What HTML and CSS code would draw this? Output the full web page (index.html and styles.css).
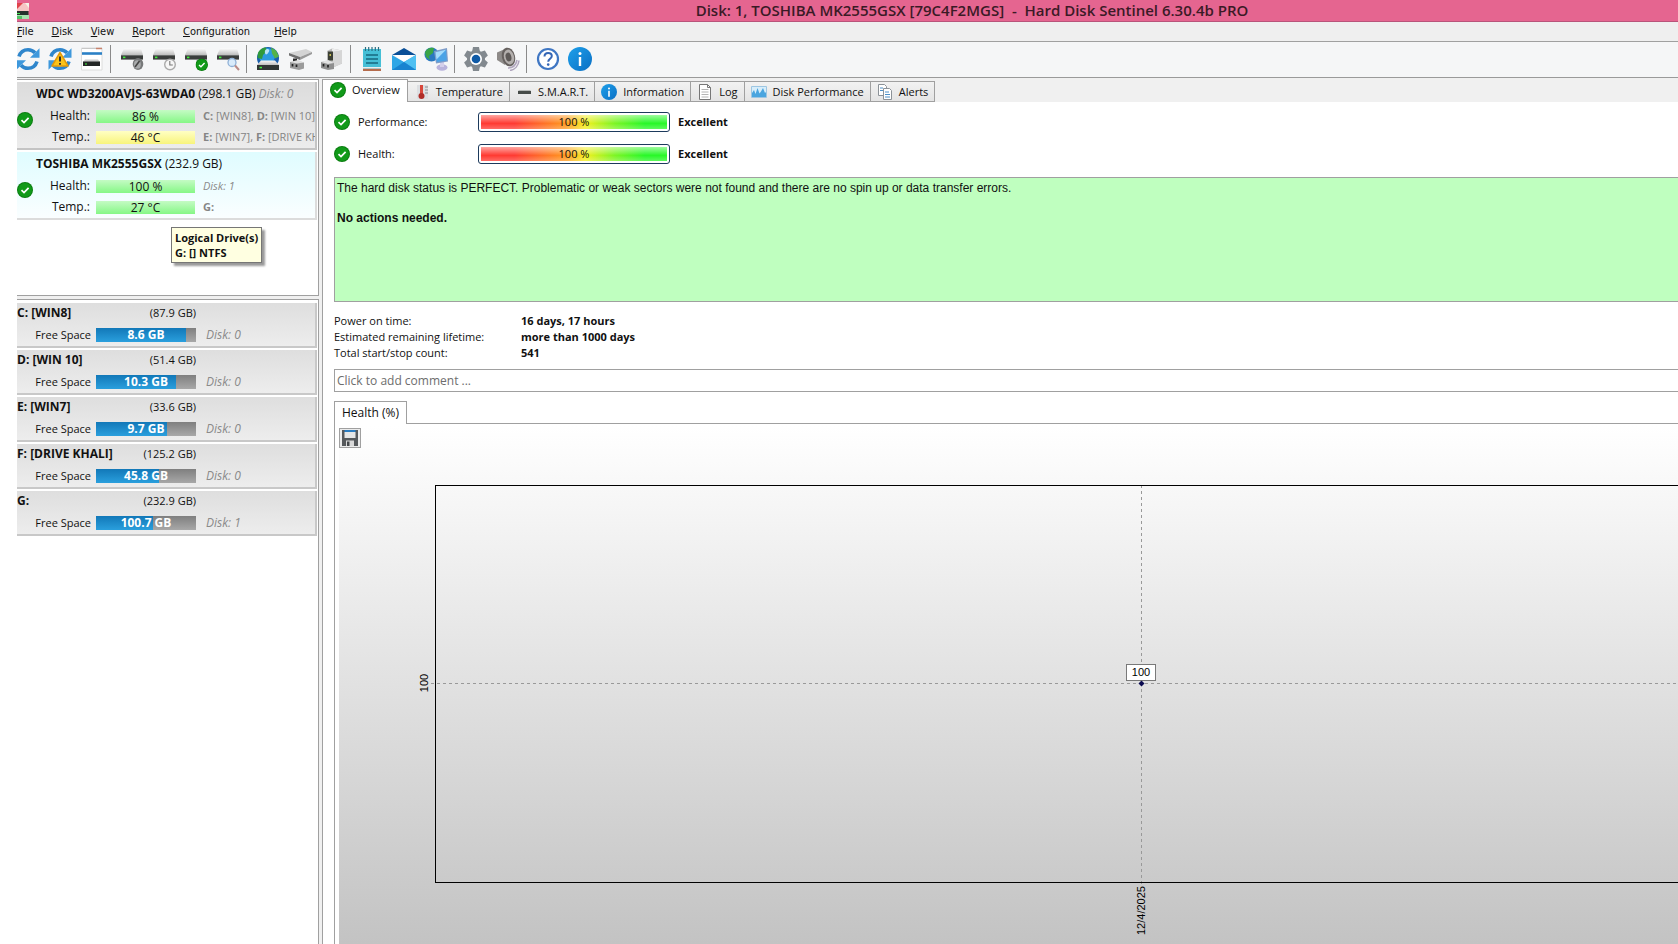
FILE: index.html
```html
<!DOCTYPE html>
<html lang="en">
<head>
    <meta charset="UTF-8">
    <meta name="viewport" content="width=device-width, initial-scale=1.0">
    <title>Hard Disk Sentinel</title>
    <link rel="stylesheet" href="styles.css">
</head>

<body>
    <!-- Shared icon shapes -->
    <svg class="defs" width="0" height="0" aria-hidden="true">
        <defs>
            <linearGradient id="silver" x1="0" y1="0" x2="0" y2="1">
                <stop offset="0" stop-color="#fafafa"/>
                <stop offset="1" stop-color="#bdbdbd"/>
            </linearGradient>
            <linearGradient id="sky" x1="0" y1="0" x2="1" y2="1">
                <stop offset="0" stop-color="#1ea0ea"/>
                <stop offset="1" stop-color="#0b6fc4"/>
            </linearGradient>
            <linearGradient id="chartBg" x1="0" y1="0" x2="0" y2="1">
                <stop offset="0" stop-color="#ffffff"/>
                <stop offset="1" stop-color="#c3c3c3"/>
            </linearGradient>
            <symbol id="check" viewBox="0 0 16 16">
                <circle cx="8" cy="8" r="8" fill="#0a7d10"/>
                <circle cx="8" cy="8" r="7" fill="#119a19"/>
                <path d="M4.5 8.2 7 10.6l4.6-4.8" fill="none" stroke="#fff" stroke-width="1.7"/>
            </symbol>
            <symbol id="info" viewBox="0 0 24 24">
                <circle cx="12" cy="12" r="12" fill="url(#sky)"/>
                <circle cx="12" cy="6.6" r="1.5" fill="#fff"/>
                <path d="M12 10v9" stroke="#fff" stroke-width="2.4"/>
            </symbol>
            <symbol id="drive" viewBox="0 0 24 24">
                <path d="M4 1.500h17l2 6.500H1z" fill="url(#silver)"/>
                <path d="M1 8h22v4.6H1z" fill="#3a3d3c"/>
                <path d="M1 8h22v1H1z" fill="#6a6d6c"/>
                <path d="M3 9.600h2.400v1.600H3z" fill="#3ff03a"/>
            </symbol>
            <symbol id="sync" viewBox="0 0 24 24">
                <path d="M3 9.500C4.500 4.800 8 2.700 12 2.700c3 0 5.300 1.200 7 3.100" fill="none" stroke="#2f86cc" stroke-width="3.600"/>
                <path d="M23.500 1.200v9.600h-9.500z" fill="#3e98dc"/>
                <path d="M21 14.500c-1.500 4.700-5 6.800-9 6.800-3 0-5.300-1.200-7-3.100" fill="none" stroke="#2f86cc" stroke-width="3.600"/>
                <path d="M.500 22.800v-9.600H10z" fill="#3e98dc"/>
            </symbol>
        </defs>
    </svg>

    <div class="app">
        <header class="titlebar">
            <svg class="app-icon" width="13" height="18" viewBox="0 0 13 18" aria-hidden="true">
                <path d="M0 1h12v8H0z" fill="#f6c4c4"/>
                <path d="M0 1h6L0 7z" fill="#e0434a"/>
                <path d="M8 1h4v5z" fill="#f4f4e8"/>
                <path d="M0 9h11.500v4H0z" fill="#26322c"/>
                <path d="M0 11h3v1H0z" fill="#43e050"/>
                <path d="M0 13h12v4H0z" fill="#a7e3b0"/>
                <path d="M0 14h5v3H0z" fill="#52c267"/>
            </svg>
            <h1>Disk: 1, TOSHIBA MK2555GSX [79C4F2MGS]&nbsp; - &nbsp;Hard Disk Sentinel 6.30.4b PRO</h1>
        </header>

        <nav class="menu">
            <button type="button"><u>F</u>ile</button>
            <button type="button"><u>D</u>isk</button>
            <button type="button"><u>V</u>iew</button>
            <button type="button"><u>R</u>eport</button>
            <button type="button"><u>C</u>onfiguration</button>
            <button type="button" class="help"><u>H</u>elp</button>
        </nav>

        <div class="toolbar">
            <button type="button" aria-label="Refresh">
                <svg viewBox="0 0 24 24"><use href="#sync"/></svg>
            </button>
            <button type="button" aria-label="Refresh with warning">
                <svg viewBox="0 0 24 24"><use href="#sync"/><path d="M12 5.500 20 19H4z" fill="#fcc419" stroke="#e39a0a" stroke-width="1.500" stroke-linejoin="round"/><path d="M12 9.500v5M12 16v1.800" stroke="#2b2b2b" stroke-width="1.900"/></svg>
            </button>
            <button type="button" aria-label="Window view">
                <svg viewBox="0 0 24 24"><path d="M1.500 1h20.500v22h-20.500z" fill="#fff" stroke="#dcdcdc"/><path d="M2 1.500h14" stroke="#c8c8c8"/><path d="M16 1.500h6" stroke="#c9826c" stroke-width="1.500"/><path d="M2 6.500h20" stroke="#2b80c6" stroke-width="2.600"/><path d="M5 12.500h13l2 2.500H3z" fill="#ccc"/><path d="M3 14.500h17v4.500H3z" fill="#242726"/><path d="M5 16.500h2v1H5z" fill="#3ff03a"/></svg>
            </button>
            <span class="sep"></span>
            <button type="button" aria-label="Disk surface">
                <svg viewBox="0 0 24 24"><use href="#drive"/><ellipse cx="18" cy="17" rx="5.300" ry="6" fill="#77797a"/><ellipse cx="17.400" cy="17.400" rx="3.400" ry="4.200" fill="#a9abac"/><path d="m15 20 4.500-6" stroke="#444" stroke-width="1.600"/></svg>
            </button>
            <button type="button" aria-label="Disk schedule">
                <svg viewBox="0 0 24 24"><use href="#drive"/><circle cx="18" cy="17.500" r="5.300" fill="#f6f6f6" stroke="#aaa" stroke-width="1.400"/><path d="M17.800 14v4h3" fill="none" stroke="#777" stroke-width="1.100"/></svg>
            </button>
            <button type="button" aria-label="Disk test">
                <svg viewBox="0 0 24 24"><use href="#drive"/><use href="#check" x="11.500" y="11.500" width="12.500" height="12.500"/></svg>
            </button>
            <button type="button" aria-label="Disk search">
                <svg viewBox="0 0 24 24"><use href="#drive"/><circle cx="16" cy="15.500" r="4" fill="#d9ebfb" stroke="#8fb0d6" stroke-width="1.300"/><path d="m19 18.500 4 4.500" stroke="#b98a88" stroke-width="2"/></svg>
            </button>
            <span class="sep"></span>
            <button type="button" aria-label="Network disk">
                <svg viewBox="0 0 24 24"><circle cx="12" cy="11" r="11" fill="#1a5fae"/><circle cx="11" cy="9" r="8" fill="#2b9be0"/><path d="M2 6C4 2 7 .500 10 .500l1 3.500-4 4-1 4-4.500-1z" fill="#2f9a3c"/><path d="m15 .600 5 3 3 6-4 2-3-5z" fill="#54b247"/><path d="M10 2.500c2-1 4 0 3 2s-2 3-3 3-2-4 0-5z" fill="#b7e4f8"/><path d="M5 13.500h14l4 4.500H1z" fill="url(#silver)"/><path d="M1 18h22v5H1z" fill="#303635"/><path d="M3.500 19.800h2.500v1.500H3.500z" fill="#3ff03a"/></svg>
            </button>
            <button type="button" aria-label="Removable disk">
                <svg viewBox="0 0 24 24"><path d="m1 6 17-4 6 3-12 5z" fill="#d4d4d4"/><path d="m1 6 11 4v3L1 8.500z" fill="#6f6f6f"/><path d="m12 10 12-5v2l-12 6z" fill="#9a9a9a"/><path d="M5 11.500h4V16H5z" fill="#292929"/><path d="m2 15 8-1 6 1.500v6L11 23l-9-2z" fill="#9b9b9b"/><path d="m2 15 8-2 6 2.500-7 1z" fill="#dedede"/><path d="M4.500 17v2.500M8.500 17.500V20" stroke="#222" stroke-width="1.700"/></svg>
            </button>
            <button type="button" aria-label="Dock">
                <svg viewBox="0 0 24 24"><path d="m7 4 5-2.500 10 2v13l-9 4-6-5z" fill="#b9b9b9"/><path d="m12 5 10-1.500v13l-9 4z" fill="#d6d6d6"/><path d="m12 1.500 10 2L12 5z" fill="#ededed"/><path d="M8 4.500h5v9H8z" fill="#3c4035"/><path d="M9.500 7h1.500v2H9.500z" fill="#c9bf55"/><path d="m1 15 7-1 6 2v6l-6 1-7-2z" fill="#8f8f8f"/><path d="m1 15 7-2 6 3-6 1z" fill="#e2e2e2"/><path d="M3.500 17v2.500M8 18v2.500" stroke="#222" stroke-width="1.700"/></svg>
            </button>
            <span class="sep"></span>
            <button type="button" aria-label="Report">
                <svg viewBox="0 0 24 24"><path d="M3 2h18v20H3z" fill="#45bfd6"/><path d="M3 21.500h18V24H3z" fill="#b56c4d"/><path d="M3 20h18v1.500H3z" fill="#e7eff0"/><path d="M5.500 0v4M8.700 0v4M12 0v4M15.300 0v4M18.500 0v4" stroke="#2a6f83" stroke-width="1.200"/><path d="M6 8h12M6 12h12M6 16h12" stroke="#17687f" stroke-width="1.500"/></svg>
            </button>
            <button type="button" aria-label="Send mail">
                <svg viewBox="0 0 24 24"><path d="M12 1 24 8H0z" fill="#0a4f98"/><path d="M2.500 8h19L12 16z" fill="#fff"/><path d="M0 8v15h24V8L12 15z" fill="#2ea6e6"/><path d="m12 15 12 8V8z" fill="#4fc0f2"/><path d="M0 23h24L12 15z" fill="#1883d0"/></svg>
            </button>
            <button type="button" aria-label="Network">
                <svg viewBox="0 0 24 24"><circle cx="7.500" cy="7.500" r="7" fill="#2a78c0"/><path d="M1 5c2-4 6-5 9-4l-1 5-4 3 1 4-4-3z" fill="#3aa546"/><ellipse cx="18" cy="20.500" rx="5.500" ry="3.200" fill="#b9b3dc"/><path d="M16 14h4v6h-4z" fill="#d4cfea"/><path d="m10 4 13-3 1 13.500-12 2z" fill="#7f9cc8"/><path d="m11.500 5.200 10.500-2.400.800 10.700-10 1.500z" fill="#4ba3e6"/><path d="m11.500 5.200 10.500-2.400-9.500 9.700z" fill="#a5dbfa"/></svg>
            </button>
            <span class="sep"></span>
            <button type="button" aria-label="Settings">
                <svg viewBox="0 0 24 24"><g fill="#82898f"><circle cx="12" cy="12" r="9"/><path id="teeth" d="M9 0h6l1 5v14l-1 5H9l-1-5V5z"/><use href="#teeth" transform="rotate(60 12 12)"/><use href="#teeth" transform="rotate(120 12 12)"/></g><circle cx="12" cy="12" r="6" fill="#fff"/><circle cx="12" cy="12" r="4.300" fill="#0f5aa6"/></svg>
            </button>
            <button type="button" aria-label="Sound">
                <svg viewBox="0 0 24 24"><path d="M12 21c5 0 8-3 9-8M14 23.500c5-1 8.500-5 9-10" fill="none" stroke="#b0a5bd" stroke-width="1.600"/><path d="M9 2 1 5.500V13l8 5z" fill="#8d8a88"/><ellipse cx="12.500" cy="10" rx="6.500" ry="9.500" fill="#66615f" transform="rotate(-14 12.500 10)"/><ellipse cx="13" cy="10" rx="5" ry="7.500" fill="#b3afad" transform="rotate(-14 13 10)"/><ellipse cx="12.500" cy="10" rx="2.800" ry="4.500" fill="#5d5957" transform="rotate(-14 12.500 10)"/></svg>
            </button>
            <span class="sep"></span>
            <button type="button" aria-label="Help">
                <svg viewBox="0 0 24 24"><circle cx="12" cy="12" r="10" fill="#fff" stroke="#3f76c3" stroke-width="2.200"/><path d="M8.500 9.500c0-5 7.300-4.500 7.300-.500 0 2.800-3.600 2.600-3.600 5.800" fill="none" stroke="#3566b5" stroke-width="2"/><circle cx="12.200" cy="17.600" r="1.300" fill="#3566b5"/></svg>
            </button>
            <button type="button" aria-label="Information">
                <svg viewBox="0 0 24 24"><use href="#info"/></svg>
            </button>
        </div>

        <div class="workspace">
            <!-- Physical disks and partitions -->
            <aside class="sidebar">
                <div class="panel disks">
                    <div class="disk">
                        <h2>WDC WD3200AVJS-63WDA0 <span>(298.1 GB)</span> <em>Disk: 0</em></h2>
                        <svg class="status" viewBox="0 0 16 16"><use href="#check"/></svg>
                        <div class="label">Health:</div>
                        <div class="meter good">86 %</div>
                        <div class="note"><b>C:</b> [WIN8], <b>D:</b> [WIN 10]</div>
                        <div class="label">Temp.:</div>
                        <div class="meter warm">46 °C</div>
                        <div class="note"><b>E:</b> [WIN7], <b>F:</b> [DRIVE KHALI]</div>
                    </div>
                    <div class="disk selected">
                        <h2>TOSHIBA MK2555GSX <span>(232.9 GB)</span></h2>
                        <svg class="status" viewBox="0 0 16 16"><use href="#check"/></svg>
                        <div class="label">Health:</div>
                        <div class="meter good">100 %</div>
                        <div class="note"><em>Disk: 1</em></div>
                        <div class="label">Temp.:</div>
                        <div class="meter good">27 °C</div>
                        <div class="note"><b>G:</b></div>
                    </div>
                    <div class="tooltip" role="tooltip">Logical Drive(s)<br>G: [] NTFS</div>
                </div>

                <div class="panel drives">
                    <div class="drive">
                        <h3>C: [WIN8] <span>(87.9 GB)</span></h3>
                        <div class="label">Free Space</div>
                        <div class="usage"><div class="fill" style="width: 90%"></div><span>8.6 GB</span></div>
                        <em>Disk: 0</em>
                    </div>
                    <div class="drive">
                        <h3>D: [WIN 10] <span>(51.4 GB)</span></h3>
                        <div class="label">Free Space</div>
                        <div class="usage"><div class="fill" style="width: 80%"></div><span>10.3 GB</span></div>
                        <em>Disk: 0</em>
                    </div>
                    <div class="drive">
                        <h3>E: [WIN7] <span>(33.6 GB)</span></h3>
                        <div class="label">Free Space</div>
                        <div class="usage"><div class="fill" style="width: 71%"></div><span>9.7 GB</span></div>
                        <em>Disk: 0</em>
                    </div>
                    <div class="drive">
                        <h3>F: [DRIVE KHALI] <span>(125.2 GB)</span></h3>
                        <div class="label">Free Space</div>
                        <div class="usage"><div class="fill" style="width: 63%"></div><span>45.8 GB</span></div>
                        <em>Disk: 0</em>
                    </div>
                    <div class="drive">
                        <h3>G: <span>(232.9 GB)</span></h3>
                        <div class="label">Free Space</div>
                        <div class="usage"><div class="fill" style="width: 57%"></div><span>100.7 GB</span></div>
                        <em>Disk: 1</em>
                    </div>
                </div>
            </aside>

            <main class="main">
                <div class="tabs" role="tablist">
                    <button type="button" role="tab" aria-selected="true" class="tab active"><svg viewBox="0 0 16 16"><use href="#check"/></svg>Overview</button>
                    <button type="button" role="tab" class="tab"><svg viewBox="0 0 16 16"><path d="M3 1h11v14H3z" fill="#dcdfe2"/><path d="M11 3h3M11 6h3M11 9h3" stroke="#8a8d90"/><path d="M7.500 1v9" stroke="#d8483d" stroke-width="3"/><circle cx="7.500" cy="12" r="3" fill="#b02d28"/></svg>Temperature</button>
                    <button type="button" role="tab" class="tab"><svg viewBox="0 0 16 16"><path d="M3 6h11l1 1H2z" fill="#b5b8b6"/><path d="M2 7h13v3H2z" fill="#464b48"/></svg>S.M.A.R.T.</button>
                    <button type="button" role="tab" class="tab"><svg viewBox="0 0 24 24"><use href="#info"/></svg>Information</button>
                    <button type="button" role="tab" class="tab"><svg viewBox="0 0 16 16"><path d="M2.500.500h8l3 3v12h-11z" fill="#fff" stroke="#777"/><path d="M10.500.500v3h3" fill="none" stroke="#777"/><path d="M4.500 5.500h7M4.500 8h7M4.500 10.500h7M4.500 13h7" stroke="#b4b4b4"/></svg>Log</button>
                    <button type="button" role="tab" class="tab"><svg viewBox="0 0 16 16"><path d="M.500 2.500h15v11H.500z" fill="#d7edfa" stroke="#9dc6e2"/><path d="M1 13V9l2-3 1.500 4 2-6 2 5.500 1.500-2L12 4l2 5 1-1v5z" fill="#4aa5df"/></svg>Disk Performance</button>
                    <button type="button" role="tab" class="tab"><svg viewBox="0 0 16 16"><path d="M1.500.500h6l2 2v9h-8z" fill="#fff" stroke="#8c9298"/><path d="M6.500 4.500h6l2 2v9h-8z" fill="#fff" stroke="#8c9298"/><path d="M3 4h3M3 6.500h3M8 8h4M8 10.500h5M8 13h5" stroke="#4e90c8"/></svg>Alerts</button>
                </div>

                <section class="overview">
                    <div class="ratings">
                        <svg viewBox="0 0 16 16"><use href="#check"/></svg>
                        <div>Performance:</div>
                        <div class="rating"><div>100 %</div></div>
                        <strong>Excellent</strong>
                        <svg viewBox="0 0 16 16"><use href="#check"/></svg>
                        <div>Health:</div>
                        <div class="rating"><div>100 %</div></div>
                        <strong>Excellent</strong>
                    </div>

                    <div class="summary">
                        <p>The hard disk status is PERFECT. Problematic or weak sectors were not found and there are no spin up or data transfer errors.</p>
                        <p><strong>No actions needed.</strong></p>
                    </div>

                    <dl class="facts">
                        <dt>Power on time:</dt>
                        <dd>16 days, 17 hours</dd>
                        <dt>Estimated remaining lifetime:</dt>
                        <dd>more than 1000 days</dd>
                        <dt>Total start/stop count:</dt>
                        <dd>541</dd>
                    </dl>

                    <input class="comment" type="text" placeholder="Click to add comment ..." aria-label="Comment">

                    <div class="graph-tabs">
                        <button type="button" class="graph-tab">Health (%)</button>
                    </div>
                    <div class="graph">
                        <button type="button" class="save" aria-label="Save graph">
                            <svg viewBox="0 0 18 18"><path d="M1 1h16v16H1z" fill="#56595c"/><path d="M3.500 1h11v2h-11z" fill="#2b7cc0"/><path d="M3.500 3h11v6h-11z" fill="#e6e6e6"/><path d="M5 11.500h8V17H5z" fill="#d9d9d9"/><path d="M6 12.500h2.500V17H6z" fill="#45484b"/></svg>
                        </button>
                        <svg class="chart" role="img" aria-label="Health chart">
                            <rect width="100%" height="100%" fill="url(#chartBg)"/>
                            <path class="grid" d="M92 257.500H1508M802.500 59V460"/>
                            <rect class="plot" x="96.500" y="59.500" width="1412" height="397"/>
                            <path d="m802.500 254.500 3 3-3 3-3-3z" fill="#0a0a50"/>
                            <rect class="tag" x="787.500" y="238.500" width="29" height="16"/>
                            <text x="802" y="250" text-anchor="middle">100</text>
                            <text class="axis" transform="translate(89 257) rotate(-90)" text-anchor="middle">100</text>
                            <text class="axis" transform="translate(806 509) rotate(-90)">12/4/2025</text>
                        </svg>
                    </div>
                </section>
            </main>
        </div>
    </div>
</body>
</html>
```
FILE: styles.css
```css
* {
    margin: 0;
    padding: 0;
    box-sizing: border-box;
}

body {
    font-family: "Open Sans", "Noto Sans", sans-serif;
    font-size: 12px;
    line-height: 16px;
    color: #111;
    background: #fff;
}

button {
    font: inherit;
    color: inherit;
    background: none;
    border: 0;
}

.defs {
    position: absolute;
}

.app {
    display: flex;
    flex-direction: column;
    height: 100vh;
    margin-left: 17px;
    background: #f0f0f0;
    overflow: hidden;
}

/* Title bar */
.titlebar {
    display: flex;
    align-items: center;
    height: 22px;
    flex: none;
    background: #e56590;
    border-bottom: 1px solid #b9547a;
}

.app-icon {
    flex: none;
}

.titlebar h1 {
    flex: 1;
    padding: 0 0 2px 236px;
    text-align: center;
    font-size: 15px;
    line-height: 18px;
    font-weight: 600;
    color: #3b1a26;
    white-space: nowrap;
}

/* Menu */
.menu {
    display: flex;
    align-items: center;
    gap: 18px;
    height: 20px;
    flex: none;
    background: #efefef;
    border-bottom: 1px solid #a0a0a0;
    font-family: "DejaVu Sans Condensed", "DejaVu Sans", sans-serif;
    font-size: 11px;
}

.menu .help {
    margin-left: 6px;
}

/* Toolbar */
.toolbar {
    display: flex;
    align-items: center;
    height: 36px;
    flex: none;
    margin-left: -5px;
    padding-bottom: 2px;
    background: #f5f6f7;
    border-bottom: 1px solid #9a9a9a;
}

.toolbar button {
    width: 32px;
    height: 32px;
    padding: 4px;
}

.toolbar svg {
    display: block;
    width: 24px;
    height: 24px;
}

.sep {
    width: 8px;
    height: 28px;
    background: linear-gradient(#8a8a8a, #8a8a8a) 2px 0 / 1px 100% no-repeat;
}

.workspace {
    display: flex;
    gap: 3px;
    flex: 1;
    min-height: 0;
}

/* Sidebar */
.sidebar {
    display: flex;
    flex-direction: column;
    gap: 3px;
    width: 302px;
    flex: none;
    padding-top: 1px;
}

.panel {
    background: #fff;
    border: 1px solid #a0a0a0;
    border-left: 0;
}

.disks {
    position: relative;
    height: 217px;
    padding: 2px 1px 0 0;
}

.drives {
    display: flex;
    flex-direction: column;
    gap: 2px;
    flex: 1;
    padding: 3px 1px 0 0;
    border-bottom: 0;
}

.disk {
    display: grid;
    grid-template-columns: 17px 50px 99px 1fr;
    grid-template-rows: 23px 20px 20px;
    gap: 1px 6px;
    align-items: center;
    height: 68px;
    margin-bottom: 2px;
    background: linear-gradient(#dcdcdc, #ececec);
    border: solid #c4c4c4;
    border-width: 0 2px 2px 0;
    overflow: hidden;
}

.disk.selected {
    background: linear-gradient(#dffcff, #fafeff);
    border-color: #dcdcdc;
}

.disk h2 {
    grid-column: 1 / -1;
    padding-left: 19px;
    font-size: 12px;
    line-height: 20px;
    white-space: nowrap;
}

.disk h2 span {
    font-weight: normal;
}

em {
    font-weight: normal;
    color: #8a8a8a;
}

.status {
    grid-row: 2 / 4;
    align-self: start;
    width: 16px;
    height: 16px;
    margin-top: 6px;
}

.label {
    text-align: right;
    white-space: nowrap;
}

.meter {
    height: 13px;
    line-height: 13px;
    text-align: center;
}

.good {
    background: linear-gradient(#c4fbc4, #86f786);
}

.warm {
    background: linear-gradient(#ffffc4, #f8f47c);
}

.note {
    min-width: 0;
    padding-left: 2px;
    overflow: hidden;
    white-space: nowrap;
    font-size: 11px;
    color: #858585;
}

.tooltip {
    position: absolute;
    left: 154px;
    top: 147px;
    padding: 2px 3px;
    background: #ffffe1;
    border: 1px solid #767676;
    box-shadow: 3px 3px 2px rgba(0, 0, 0, 0.4);
    font-size: 11px;
    font-weight: bold;
    line-height: 15px;
    white-space: nowrap;
}

.drive {
    display: grid;
    grid-template-columns: 74px 100px 1fr;
    grid-template-rows: 20px 23px;
    column-gap: 5px;
    align-items: center;
    height: 45px;
    background: linear-gradient(#dedede, #ededed);
    border: solid #c8c8c8;
    border-width: 0 2px 2px 0;
    font-size: 11px;
}

.drive h3 {
    grid-column: 1 / 3;
    display: flex;
    justify-content: space-between;
    font-size: 12px;
    line-height: 20px;
}

.drive h3 span {
    font-size: 11px;
    font-weight: normal;
}

.drive .label {
    grid-column: 1;
}

.drive em {
    padding-left: 5px;
    font-size: 12px;
}

.usage {
    display: grid;
    height: 14px;
    background: linear-gradient(#7f7f7f, #a8a8a8);
    color: #fff;
    font-size: 12px;
    font-weight: bold;
    line-height: 14px;
    text-align: center;
}

.usage .fill,
.usage span {
    grid-area: 1 / 1;
}

.fill {
    background: linear-gradient(#1278b8, #2a9fdd);
}

/* Tabs */
.main {
    display: flex;
    flex-direction: column;
    flex: 1;
    min-width: 0;
}

.tabs {
    display: flex;
    align-items: flex-end;
    height: 24px;
    flex: none;
}

.tab {
    display: flex;
    align-items: center;
    gap: 6px;
    height: 21px;
    padding: 0 6px;
    background: linear-gradient(#f2f2f2, #e4e4e4);
    border: 1px solid #a0a0a0;
    border-left: 0;
    font-size: 11px;
    white-space: nowrap;
}

.tab svg {
    width: 16px;
    height: 16px;
}

.tab.active {
    height: 23px;
    padding: 0 7px 2px;
    background: #fff;
    border-left: 1px solid #a0a0a0;
    border-bottom: 0;
}

.overview {
    display: flex;
    flex-direction: column;
    flex: 1;
    padding: 4px 0 0 11px;
    background: #fff;
    border-left: 1px solid #a0a0a0;
}

.ratings {
    display: grid;
    grid-template-columns: 16px 112px 192px 1fr;
    grid-auto-rows: 32px;
    column-gap: 8px;
    align-items: center;
    font-size: 11px;
}

.ratings svg {
    width: 16px;
    height: 16px;
}

.rating {
    height: 20px;
    padding: 2px;
    border: 1px solid #1d3a5c;
    border-radius: 3px;
    line-height: 14px;
    text-align: center;
}

.rating div {
    background: linear-gradient(rgba(255, 255, 255, 0.55), rgba(255, 255, 255, 0) 60%, rgba(255, 255, 255, 0.25)),
        linear-gradient(90deg, #ff3a32 18%, #ff9a1e 46%, #f4f01e 56%, #7cf524 72%, #28f828 88%);
}

/* Status text */
.summary {
    height: 125px;
    margin-top: 7px;
    padding: 3px 2px;
    background: #bfffbf;
    border: 1px solid #a0a0a0;
    border-right: 0;
    font-family: "Liberation Sans", Arial, sans-serif;
    font-size: 12px;
    line-height: 15px;
}

.summary p {
    margin-bottom: 15px;
}

.facts {
    display: grid;
    grid-template-columns: 187px 1fr;
    grid-auto-rows: 16px;
    margin-top: 11px;
    font-size: 11px;
}

.facts dd {
    font-weight: bold;
}

.comment {
    height: 23px;
    margin-top: 8px;
    padding: 0 2px;
    border: 1px solid #a0a0a0;
    border-right: 0;
    font: inherit;
}

.comment::placeholder {
    color: #6d6d6d;
}

/* Graph */
.graph-tabs {
    display: flex;
    height: 23px;
    margin-top: 9px;
    border-bottom: 1px solid #a0a0a0;
}

.graph-tab {
    height: 23px;
    padding: 0 7px;
    background: #fff;
    border: 1px solid #a0a0a0;
    border-bottom: 0;
}

.graph {
    position: relative;
    flex: 1;
    padding: 2px 0 0 4px;
    border-left: 1px solid #a0a0a0;
}

.chart {
    display: block;
    width: 100%;
    height: 518px;
    font-family: "Liberation Sans", Arial, sans-serif;
    font-size: 11px;
}

.save {
    position: absolute;
    left: 4px;
    top: 4px;
    width: 22px;
    height: 20px;
    background: #ececec;
    border: 1px solid #a0a0a0;
}

.save svg {
    display: block;
    width: 18px;
    height: 18px;
    margin: 0 auto;
}

.grid {
    fill: none;
    stroke: #999;
    stroke-dasharray: 3 3;
}

.plot {
    fill: none;
    stroke: #000;
}

.tag {
    fill: #fff;
    stroke: #000;
    stroke-dasharray: 1 1;
}
```
